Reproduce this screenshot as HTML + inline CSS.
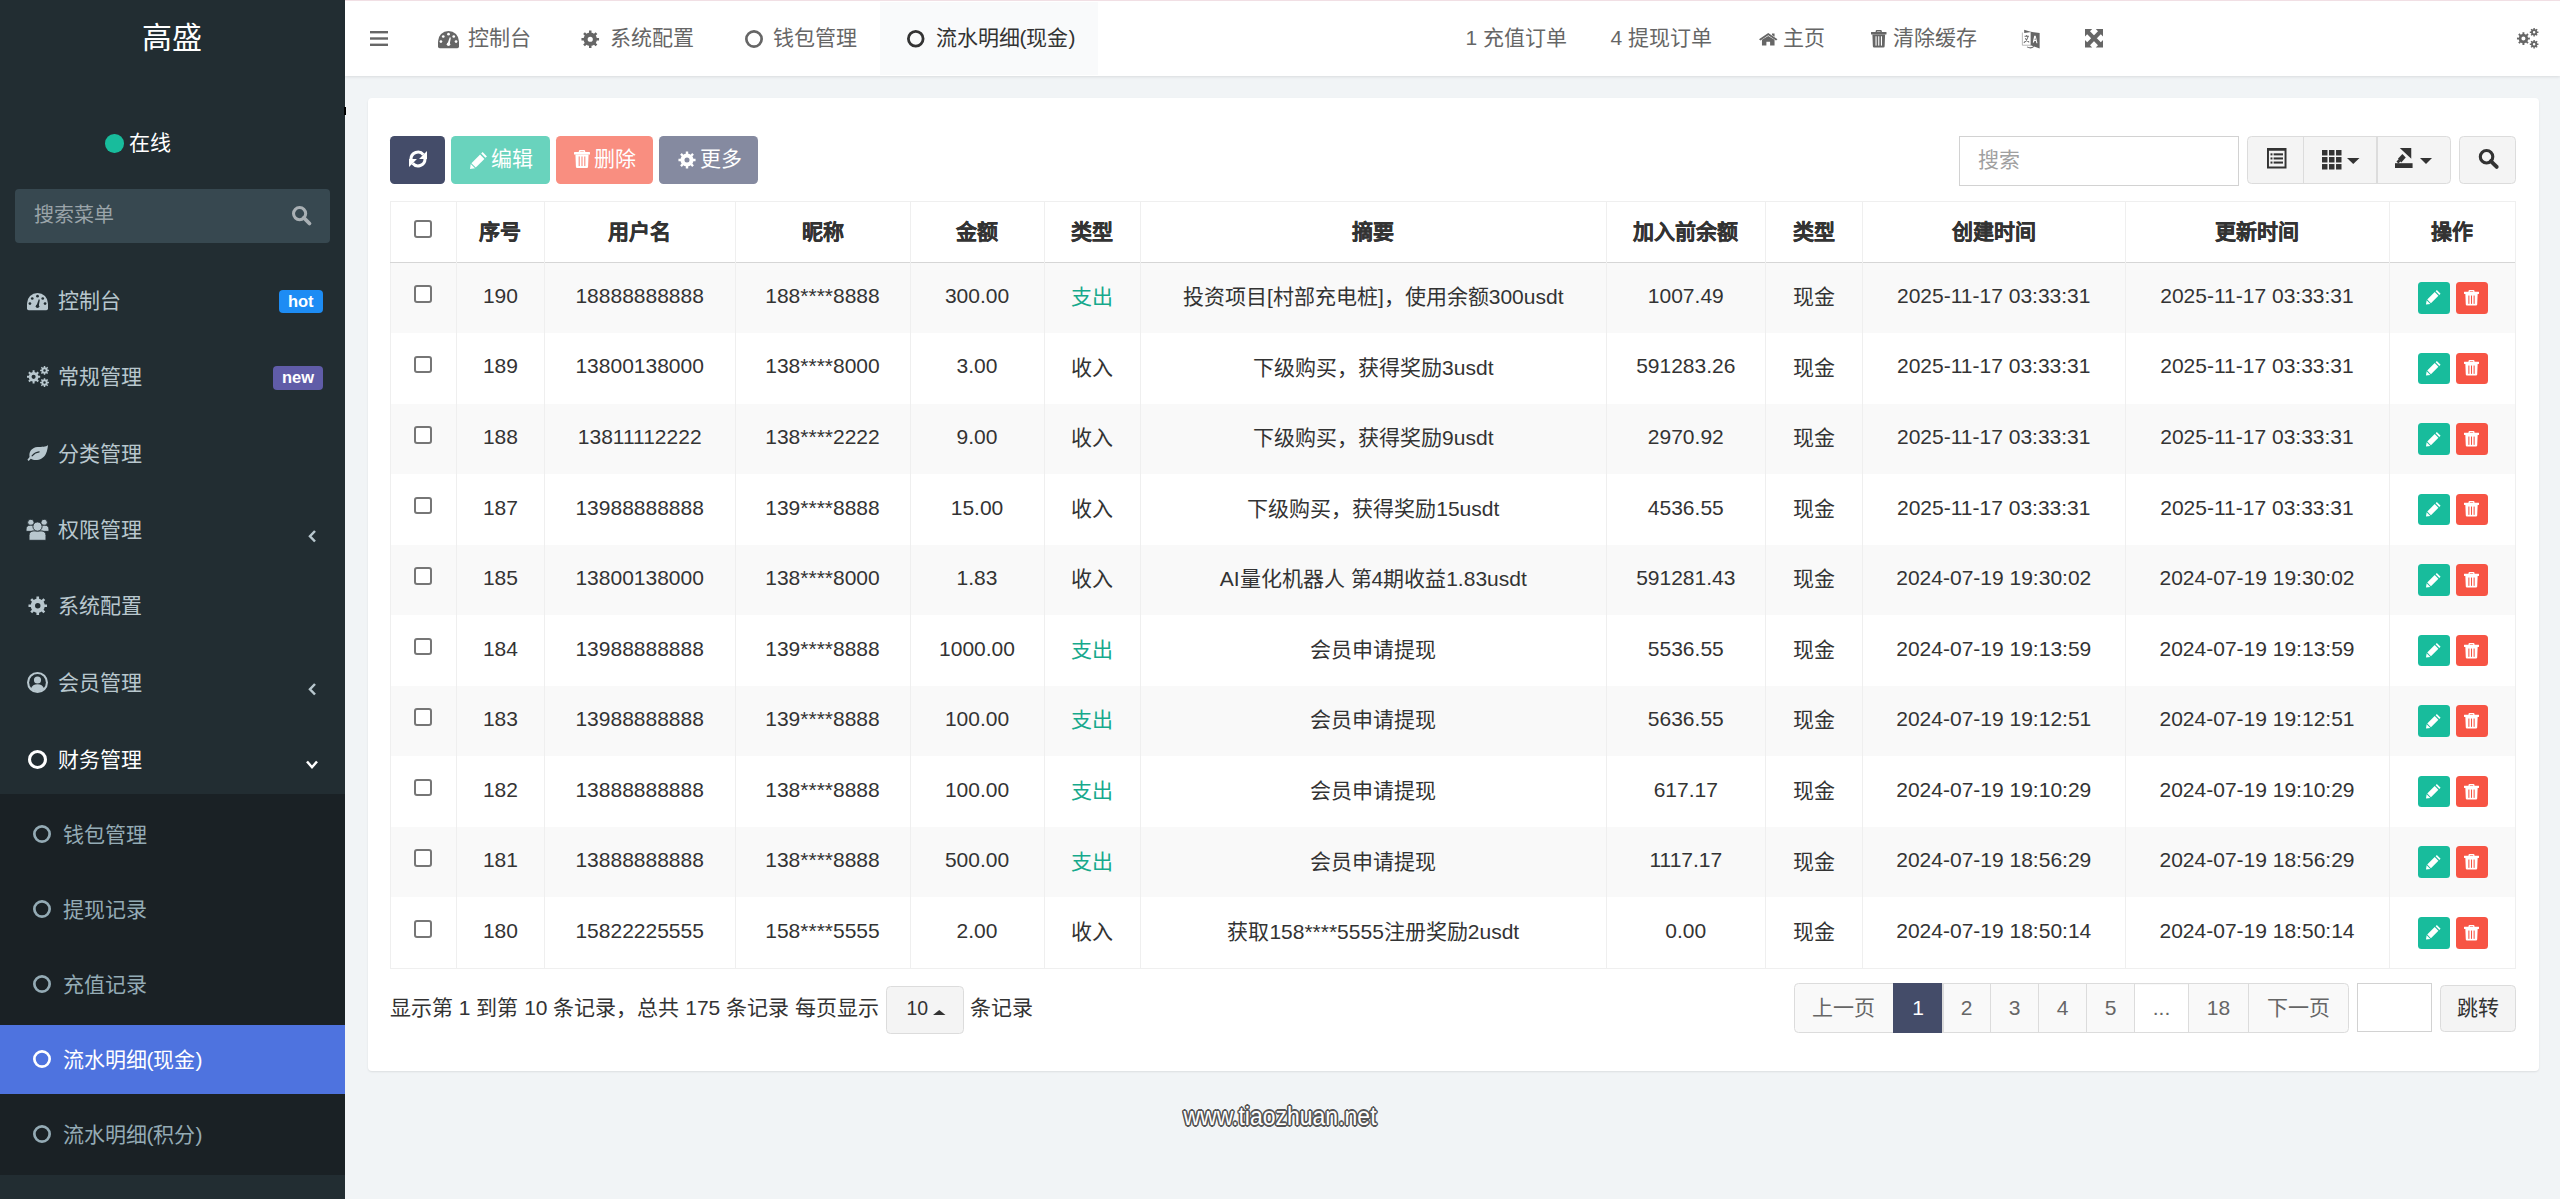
<!DOCTYPE html>
<html lang="zh-CN"><head><meta charset="utf-8"><title>流水明细</title>
<style>
*{box-sizing:border-box;margin:0;padding:0}
html,body{width:2560px;height:1199px;overflow:hidden;background:#f1f4f6;font-family:"Liberation Sans", sans-serif;color:#333}
.abs{position:absolute}
.t{position:absolute;white-space:nowrap}
.i{position:absolute;display:block;overflow:visible}
.badge{border-radius:4px;color:#fff;font-weight:bold;font-size:16.5px;line-height:23px;text-align:center}
.btn{border-radius:4.5px}
.btn2{width:31.5px;height:31.5px;border-radius:3.5px}
.cb{width:18px;height:17.5px;border:2px solid #767676;border-radius:3px;background:#fff}
</style></head><body>
<div class="abs" style="left:0;top:0;width:345px;height:1199px;background:#222d32"></div>
<div class="abs" style="left:0;top:793.5px;width:345px;height:381px;background:#1a2125"></div>
<div class="abs" style="left:0;top:1025px;width:345px;height:69px;background:#4e73df"></div>
<div class="t" style="left:-128px;width:600px;text-align:center;top:16.70px;height:42px;line-height:42px;font-size:30px;color:#fff;">高盛</div>
<div class="abs" style="left:105px;top:134px;width:18.5px;height:18.5px;border-radius:50%;background:#18bc9c"></div>
<div class="t" style="left:128.5px;top:127.70px;height:29px;line-height:29px;font-size:21px;color:#fff;">在线</div>
<div class="abs" style="left:15px;top:189px;width:315px;height:54px;background:#374850;border-radius:4px"></div>
<div class="t" style="left:34px;top:200.70px;height:28px;line-height:28px;font-size:20px;color:#9aa4a9;">搜索菜单</div>
<svg class="i" style="left:292px;top:206px;width:19px;height:19px;" viewBox="0 0 100 100"><circle cx="40" cy="40" r="32" fill="none" stroke="#a9b0b4" stroke-width="16"/><path d="M62,62 L92,92" stroke="#a9b0b4" stroke-width="20" stroke-linecap="round"/></svg>
<div class="t" style="left:58px;top:285.60px;height:29px;line-height:29px;font-size:21px;color:#b8c7ce;">控制台</div>
<svg class="i" style="left:27px;top:292.7px;width:21px;height:17.3px;" viewBox="0 0 100 82"><path fill="#b8c7ce" d="M0,50 A50,50 0 0,1 100,50 L100,74 Q100,82 92,82 L8,82 Q0,82 0,74Z"/><g fill="#222d32"><circle cx="50" cy="15" r="6.5"/><circle cx="25" cy="26" r="6.5"/><circle cx="75" cy="26" r="6.5"/><circle cx="14" cy="50" r="6.5"/><circle cx="86" cy="50" r="6.5"/><path d="M45,60 L56,30 L61,32 L56,62Z"/><circle cx="50" cy="63" r="8.5"/></g></svg>
<div class="t" style="left:58px;top:362.10px;height:29px;line-height:29px;font-size:21px;color:#b8c7ce;">常规管理</div>
<svg class="i" style="left:25.8px;top:366.0px;width:23px;height:21px;" viewBox="0 0 100 91"><path fill="#b8c7ce" fill-rule="evenodd" d="M52.40,38.96 L53.57,42.76 L61.67,42.66 L61.67,51.34 L53.57,51.24 L52.40,55.04 L50.54,58.55 L56.34,64.21 L50.21,70.34 L44.55,64.54 L41.04,66.40 L37.24,67.57 L37.34,75.67 L28.66,75.67 L28.76,67.57 L24.96,66.40 L21.45,64.54 L15.79,70.34 L9.66,64.21 L15.46,58.55 L13.60,55.04 L12.43,51.24 L4.33,51.34 L4.33,42.66 L12.43,42.76 L13.60,38.96 L15.46,35.45 L9.66,29.79 L15.79,23.66 L21.45,29.46 L24.96,27.60 L28.76,26.43 L28.66,18.33 L37.34,18.33 L37.24,26.43 L41.04,27.60 L44.55,29.46 L50.21,23.66 L56.34,29.79 L50.54,35.45ZM24.00,47.00a9.00,9.00 0 1,0 18.00,0a9.00,9.00 0 1,0 -18.00,0Z"/><path fill="#b8c7ce" fill-rule="evenodd" d="M93.43,13.64 L94.14,15.87 L99.73,15.76 L99.73,22.24 L94.14,22.13 L93.43,24.36 L92.36,26.43 L96.39,30.31 L91.81,34.89 L87.93,30.86 L85.86,31.93 L83.63,32.64 L83.74,38.23 L77.26,38.23 L77.37,32.64 L75.14,31.93 L73.07,30.86 L69.19,34.89 L64.61,30.31 L68.64,26.43 L67.57,24.36 L66.86,22.13 L61.27,22.24 L61.27,15.76 L66.86,15.87 L67.57,13.64 L68.64,11.57 L64.61,7.69 L69.19,3.11 L73.07,7.14 L75.14,6.07 L77.37,5.36 L77.26,-0.23 L83.74,-0.23 L83.63,5.36 L85.86,6.07 L87.93,7.14 L91.81,3.11 L96.39,7.69 L92.36,11.57ZM75.00,19.00a5.50,5.50 0 1,0 11.00,0a5.50,5.50 0 1,0 -11.00,0Z"/><path fill="#b8c7ce" fill-rule="evenodd" d="M93.43,66.64 L94.14,68.87 L99.73,68.76 L99.73,75.24 L94.14,75.13 L93.43,77.36 L92.36,79.43 L96.39,83.31 L91.81,87.89 L87.93,83.86 L85.86,84.93 L83.63,85.64 L83.74,91.23 L77.26,91.23 L77.37,85.64 L75.14,84.93 L73.07,83.86 L69.19,87.89 L64.61,83.31 L68.64,79.43 L67.57,77.36 L66.86,75.13 L61.27,75.24 L61.27,68.76 L66.86,68.87 L67.57,66.64 L68.64,64.57 L64.61,60.69 L69.19,56.11 L73.07,60.14 L75.14,59.07 L77.37,58.36 L77.26,52.77 L83.74,52.77 L83.63,58.36 L85.86,59.07 L87.93,60.14 L91.81,56.11 L96.39,60.69 L92.36,64.57ZM75.00,72.00a5.50,5.50 0 1,0 11.00,0a5.50,5.50 0 1,0 -11.00,0Z"/></svg>
<div class="t" style="left:58px;top:438.50px;height:29px;line-height:29px;font-size:21px;color:#b8c7ce;">分类管理</div>
<svg class="i" style="left:27px;top:444.0px;width:21px;height:17px;" viewBox="0 0 100 80"><path fill="#b8c7ce" d="M100,4 C90,14 70,12 50,14 C24,17 8,34 12,62 L2,74 L8,80 L18,70 C40,84 78,74 90,46 C97,30 99,16 100,4Z"/><path fill="none" stroke="#222d32" stroke-width="5" stroke-linecap="round" d="M24,56 C34,44 44,38 58,37"/></svg>
<div class="t" style="left:58px;top:515.00px;height:29px;line-height:29px;font-size:21px;color:#b8c7ce;">权限管理</div>
<svg class="i" style="left:26px;top:518.6999999999999px;width:23px;height:21.3px;" viewBox="0 0 100 93"><g fill="#b8c7ce" stroke="#222d32" stroke-width="4"><circle cx="21" cy="15" r="14"/><circle cx="79" cy="15" r="14"/><path d="M0,54 L0,44 C0,32 8,27 18,27 L82,27 C92,27 100,32 100,44 L100,54Z"/><path d="M13,93 L13,72 C13,58 22,52 34,52 L66,52 C78,52 87,58 87,72 L87,93Z"/><circle cx="50" cy="33" r="20"/></g></svg>
<div class="t" style="left:58px;top:591.30px;height:29px;line-height:29px;font-size:21px;color:#b8c7ce;">系统配置</div>
<svg class="i" style="left:28px;top:596.0px;width:19.5px;height:19.5px;" viewBox="0 0 100 100"><path fill="#b8c7ce" fill-rule="evenodd" d="M83.26,36.22 L85.35,43.21 L97.53,43.29 L97.53,56.71 L85.35,56.79 L83.26,63.78 L79.80,70.20 L88.35,78.87 L78.87,88.35 L70.20,79.80 L63.78,83.26 L56.79,85.35 L56.71,97.53 L43.29,97.53 L43.21,85.35 L36.22,83.26 L29.80,79.80 L21.13,88.35 L11.65,78.87 L20.20,70.20 L16.74,63.78 L14.65,56.79 L2.47,56.71 L2.47,43.29 L14.65,43.21 L16.74,36.22 L20.20,29.80 L11.65,21.13 L21.13,11.65 L29.80,20.20 L36.22,16.74 L43.21,14.65 L43.29,2.47 L56.71,2.47 L56.79,14.65 L63.78,16.74 L70.20,20.20 L78.87,11.65 L88.35,21.13 L79.80,29.80ZM36.00,50.00a14.00,14.00 0 1,0 28.00,0a14.00,14.00 0 1,0 -28.00,0Z"/></svg>
<div class="t" style="left:58px;top:667.90px;height:29px;line-height:29px;font-size:21px;color:#b8c7ce;">会员管理</div>
<svg class="i" style="left:27px;top:672.0px;width:21px;height:21px;" viewBox="0 0 100 100"><circle cx="50" cy="50" r="50" fill="#b8c7ce"/><circle cx="50" cy="50" r="40" fill="#222d32"/><circle cx="50" cy="38" r="17" fill="#b8c7ce"/><path fill="#b8c7ce" d="M18,80 C24,64 34,58 50,58 C66,58 76,64 82,80 C74,88 62,92 50,92 C38,92 26,88 18,80Z"/></svg>
<div class="t" style="left:58px;top:744.50px;height:29px;line-height:29px;font-size:21px;color:#fff;">财务管理</div>
<svg class="i" style="left:28px;top:750.0px;width:19px;height:19px;" viewBox="0 0 100 100"><circle cx="50" cy="50" r="42.0" fill="none" stroke="#fff" stroke-width="16"/></svg>
<div class="abs badge" style="left:278.5px;top:289.5px;width:44.5px;height:23.5px;background:#1d8cf4">hot</div>
<div class="abs badge" style="left:273px;top:365.5px;width:50px;height:24px;background:#605ca8">new</div>
<svg class="i" style="left:307.5px;top:530px;width:8px;height:12.5px;" viewBox="0 0 8 12.5"><path fill="none" stroke="#b8c7ce" stroke-width="2.5" d="M7,1 L2,6.25 L7,11.5"/></svg>
<svg class="i" style="left:307.5px;top:683px;width:8px;height:12.5px;" viewBox="0 0 8 12.5"><path fill="none" stroke="#b8c7ce" stroke-width="2.5" d="M7,1 L2,6.25 L7,11.5"/></svg>
<svg class="i" style="left:306px;top:760px;width:12px;height:9px;" viewBox="0 0 12 9"><path fill="none" stroke="#fff" stroke-width="2.5" d="M1,1.5 L6,7.2 L11,1.5"/></svg>
<div class="t" style="left:62.5px;top:819.90px;height:29px;line-height:29px;font-size:21px;color:#94abb5;">钱包管理</div>
<svg class="i" style="left:33px;top:825.0px;width:18px;height:18px;" viewBox="0 0 100 100"><circle cx="50" cy="50" r="42.5" fill="none" stroke="#94abb5" stroke-width="15"/></svg>
<div class="t" style="left:62.5px;top:894.90px;height:29px;line-height:29px;font-size:21px;color:#94abb5;">提现记录</div>
<svg class="i" style="left:33px;top:900.0px;width:18px;height:18px;" viewBox="0 0 100 100"><circle cx="50" cy="50" r="42.5" fill="none" stroke="#94abb5" stroke-width="15"/></svg>
<div class="t" style="left:62.5px;top:969.90px;height:29px;line-height:29px;font-size:21px;color:#94abb5;">充值记录</div>
<svg class="i" style="left:33px;top:975.0px;width:18px;height:18px;" viewBox="0 0 100 100"><circle cx="50" cy="50" r="42.5" fill="none" stroke="#94abb5" stroke-width="15"/></svg>
<div class="t" style="left:62.5px;top:1045.10px;height:29px;line-height:29px;font-size:21px;color:#fff;">流水明细(现金)</div>
<svg class="i" style="left:33px;top:1050.2px;width:18px;height:18px;" viewBox="0 0 100 100"><circle cx="50" cy="50" r="42.5" fill="none" stroke="#fff" stroke-width="15"/></svg>
<div class="t" style="left:62.5px;top:1119.90px;height:29px;line-height:29px;font-size:21px;color:#94abb5;">流水明细(积分)</div>
<svg class="i" style="left:33px;top:1125.0px;width:18px;height:18px;" viewBox="0 0 100 100"><circle cx="50" cy="50" r="42.5" fill="none" stroke="#94abb5" stroke-width="15"/></svg>
<div class="abs" style="left:344px;top:107px;width:2px;height:8px;background:#000"></div>
<div class="abs" style="left:345px;top:0;width:2215px;height:75.5px;background:#fff;box-shadow:0 1px 3px rgba(0,0,0,.10)"></div>
<div class="abs" style="left:345px;top:0;width:2215px;height:1px;background:#f1dfe4"></div>
<div class="abs" style="left:880px;top:2px;width:218px;height:73px;background:#f9fafb"></div>
<svg class="i" style="left:370px;top:31px;width:18px;height:15px;" viewBox="0 0 100 100" preserveAspectRatio="none"><g fill="#666"><rect x="0" y="0" width="100" height="16"/><rect x="0" y="42" width="100" height="16"/><rect x="0" y="84" width="100" height="16"/></g></svg>
<svg class="i" style="left:438px;top:30.5px;width:21px;height:17.3px;" viewBox="0 0 100 82"><path fill="#666" d="M0,50 A50,50 0 0,1 100,50 L100,74 Q100,82 92,82 L8,82 Q0,82 0,74Z"/><g fill="#fff"><circle cx="50" cy="15" r="6.5"/><circle cx="25" cy="26" r="6.5"/><circle cx="75" cy="26" r="6.5"/><circle cx="14" cy="50" r="6.5"/><circle cx="86" cy="50" r="6.5"/><path d="M45,60 L56,30 L61,32 L56,62Z"/><circle cx="50" cy="63" r="8.5"/></g></svg>
<div class="t" style="left:467.5px;top:23.20px;height:29px;line-height:29px;font-size:21px;color:#666;">控制台</div>
<svg class="i" style="left:581px;top:29.5px;width:18.5px;height:18.5px;" viewBox="0 0 100 100"><path fill="#666" fill-rule="evenodd" d="M83.26,36.22 L85.35,43.21 L97.53,43.29 L97.53,56.71 L85.35,56.79 L83.26,63.78 L79.80,70.20 L88.35,78.87 L78.87,88.35 L70.20,79.80 L63.78,83.26 L56.79,85.35 L56.71,97.53 L43.29,97.53 L43.21,85.35 L36.22,83.26 L29.80,79.80 L21.13,88.35 L11.65,78.87 L20.20,70.20 L16.74,63.78 L14.65,56.79 L2.47,56.71 L2.47,43.29 L14.65,43.21 L16.74,36.22 L20.20,29.80 L11.65,21.13 L21.13,11.65 L29.80,20.20 L36.22,16.74 L43.21,14.65 L43.29,2.47 L56.71,2.47 L56.79,14.65 L63.78,16.74 L70.20,20.20 L78.87,11.65 L88.35,21.13 L79.80,29.80ZM36.00,50.00a14.00,14.00 0 1,0 28.00,0a14.00,14.00 0 1,0 -28.00,0Z"/></svg>
<div class="t" style="left:609.5px;top:23.20px;height:29px;line-height:29px;font-size:21px;color:#666;">系统配置</div>
<svg class="i" style="left:744.5px;top:29.5px;width:18px;height:18px;" viewBox="0 0 100 100"><circle cx="50" cy="50" r="42.5" fill="none" stroke="#666" stroke-width="15"/></svg>
<div class="t" style="left:772.5px;top:23.20px;height:29px;line-height:29px;font-size:21px;color:#666;">钱包管理</div>
<svg class="i" style="left:907px;top:29.5px;width:17.5px;height:17.5px;" viewBox="0 0 100 100"><circle cx="50" cy="50" r="42.0" fill="none" stroke="#333" stroke-width="16"/></svg>
<div class="t" style="left:935.5px;top:23.20px;height:29px;line-height:29px;font-size:21px;color:#333;">流水明细(现金)</div>
<div class="t" style="left:1465.5px;top:23.20px;height:29px;line-height:29px;font-size:21px;color:#666;">1 充值订单</div>
<div class="t" style="left:1610.5px;top:23.20px;height:29px;line-height:29px;font-size:21px;color:#666;">4 提现订单</div>
<svg class="i" style="left:1758.5px;top:31.5px;width:18.5px;height:14px;" viewBox="0 0 100 100" preserveAspectRatio="none"><g fill="#666"><path d="M50,8 L100,52 L92,60 L50,24 L8,60 L0,52Z"/><path d="M70,10 L84,10 L84,34 L70,22Z"/><path d="M16,56 L50,28 L84,56 L84,96 L60,96 L60,70 L40,70 L40,96 L16,96Z"/></g></svg>
<div class="t" style="left:1783px;top:23.20px;height:29px;line-height:29px;font-size:21px;color:#666;">主页</div>
<svg class="i" style="left:1871px;top:30px;width:15.5px;height:17.5px;" viewBox="0 0 100 112" preserveAspectRatio="none"><g fill="#666"><path fill-rule="evenodd" d="M30,14 L30,8 Q30,0 38,0 L62,0 Q70,0 70,8 L70,14Z M39,14 L39,9 L61,9 L61,14Z"/><rect x="0" y="13" width="100" height="15" rx="2"/><path d="M9,28 L91,28 L88,104 Q88,112 80,112 L20,112 Q12,112 12,104Z"/></g><g fill="#fff"><rect x="29" y="40" width="7" height="60"/><rect x="46.5" y="40" width="7" height="60"/><rect x="64" y="40" width="7" height="60"/></g></svg>
<div class="t" style="left:1893px;top:23.20px;height:29px;line-height:29px;font-size:21px;color:#666;">清除缓存</div>
<svg class="i" style="left:2022px;top:28px;width:18px;height:20.5px;" viewBox="0 0 100 100" preserveAspectRatio="none"><path fill="none" stroke="#666" stroke-width="4" opacity=".6" d="M2,22 L2,84 L50,84"/><path fill="#666" d="M12,8 L52,20 L12,24Z"/><path fill="#666" d="M48,18 L98,24 L98,100 L48,84Z"/><path fill="#fff" d="M60,70 L68,38 L76,38 L86,74 L80,74 L77,64 L69,64 L66,72Z M70,58 L76,58 L73,46Z"/><path fill="none" stroke="#666" stroke-width="5" d="M14,40 L38,40 M26,34 L26,40 M34,42 C30,56 22,66 10,72 M18,50 C24,60 30,66 40,70"/><path fill="none" stroke="#666" stroke-width="5" d="M28,92 C40,98 56,98 66,90"/></svg>
<svg class="i" style="left:2085px;top:29px;width:18px;height:18.5px;" viewBox="0 0 100 100" preserveAspectRatio="none"><g fill="#666"><path d="M0,0 L40,0 L0,40Z"/><path d="M100,0 L60,0 L100,40Z"/><path d="M0,100 L40,100 L0,60Z"/><path d="M100,100 L60,100 L100,60Z"/></g><path stroke="#666" stroke-width="22" d="M12,12 L88,88 M88,12 L12,88"/></svg>
<svg class="i" style="left:2516px;top:28px;width:22.5px;height:20.5px;" viewBox="0 0 100 91" preserveAspectRatio="none"><path fill="#666" fill-rule="evenodd" d="M52.40,38.96 L53.57,42.76 L61.67,42.66 L61.67,51.34 L53.57,51.24 L52.40,55.04 L50.54,58.55 L56.34,64.21 L50.21,70.34 L44.55,64.54 L41.04,66.40 L37.24,67.57 L37.34,75.67 L28.66,75.67 L28.76,67.57 L24.96,66.40 L21.45,64.54 L15.79,70.34 L9.66,64.21 L15.46,58.55 L13.60,55.04 L12.43,51.24 L4.33,51.34 L4.33,42.66 L12.43,42.76 L13.60,38.96 L15.46,35.45 L9.66,29.79 L15.79,23.66 L21.45,29.46 L24.96,27.60 L28.76,26.43 L28.66,18.33 L37.34,18.33 L37.24,26.43 L41.04,27.60 L44.55,29.46 L50.21,23.66 L56.34,29.79 L50.54,35.45ZM24.00,47.00a9.00,9.00 0 1,0 18.00,0a9.00,9.00 0 1,0 -18.00,0Z"/><path fill="#666" fill-rule="evenodd" d="M93.43,13.64 L94.14,15.87 L99.73,15.76 L99.73,22.24 L94.14,22.13 L93.43,24.36 L92.36,26.43 L96.39,30.31 L91.81,34.89 L87.93,30.86 L85.86,31.93 L83.63,32.64 L83.74,38.23 L77.26,38.23 L77.37,32.64 L75.14,31.93 L73.07,30.86 L69.19,34.89 L64.61,30.31 L68.64,26.43 L67.57,24.36 L66.86,22.13 L61.27,22.24 L61.27,15.76 L66.86,15.87 L67.57,13.64 L68.64,11.57 L64.61,7.69 L69.19,3.11 L73.07,7.14 L75.14,6.07 L77.37,5.36 L77.26,-0.23 L83.74,-0.23 L83.63,5.36 L85.86,6.07 L87.93,7.14 L91.81,3.11 L96.39,7.69 L92.36,11.57ZM75.00,19.00a5.50,5.50 0 1,0 11.00,0a5.50,5.50 0 1,0 -11.00,0Z"/><path fill="#666" fill-rule="evenodd" d="M93.43,66.64 L94.14,68.87 L99.73,68.76 L99.73,75.24 L94.14,75.13 L93.43,77.36 L92.36,79.43 L96.39,83.31 L91.81,87.89 L87.93,83.86 L85.86,84.93 L83.63,85.64 L83.74,91.23 L77.26,91.23 L77.37,85.64 L75.14,84.93 L73.07,83.86 L69.19,87.89 L64.61,83.31 L68.64,79.43 L67.57,77.36 L66.86,75.13 L61.27,75.24 L61.27,68.76 L66.86,68.87 L67.57,66.64 L68.64,64.57 L64.61,60.69 L69.19,56.11 L73.07,60.14 L75.14,59.07 L77.37,58.36 L77.26,52.77 L83.74,52.77 L83.63,58.36 L85.86,59.07 L87.93,60.14 L91.81,56.11 L96.39,60.69 L92.36,64.57ZM75.00,72.00a5.50,5.50 0 1,0 11.00,0a5.50,5.50 0 1,0 -11.00,0Z"/></svg>
<div class="abs" style="left:368px;top:98px;width:2170.5px;height:973px;background:#fff;border-radius:4px;box-shadow:0 1px 2px rgba(0,0,0,.09)"></div>
<div class="abs btn" style="left:390px;top:136px;width:55px;height:48px;background:#444c69"></div>
<svg class="i" style="left:409px;top:150px;width:18px;height:18px;" viewBox="0 0 100 100"><g fill="none" stroke="#fff" stroke-width="17"><path d="M11,50 A39,39 0 0,1 80,26"/><path d="M89,50 A39,39 0 0,1 20,74"/></g><g fill="#fff"><path d="M100,6 L100,50 L56,50Z"/><path d="M0,94 L0,50 L44,50Z"/></g></svg>
<div class="abs btn" style="left:451px;top:136px;width:99px;height:48px;background:#69d3bd"></div>
<svg class="i" style="left:469.5px;top:150.5px;width:18px;height:18px;" viewBox="0 0 100 100"><g fill="#fff"><path d="M70,6 L94,30 L86,38 L62,14Z"/><path d="M56,20 L80,44 L32,92 L8,68Z"/><path d="M4,72 L28,96 L0,100Z"/></g></svg>
<div class="t" style="left:491px;top:144.20px;height:29px;line-height:29px;font-size:21px;color:#fff;">编辑</div>
<div class="abs btn" style="left:556px;top:136px;width:97px;height:48px;background:#f98e80"></div>
<svg class="i" style="left:574px;top:150px;width:16px;height:18px;" viewBox="0 0 100 112" preserveAspectRatio="none"><g fill="#fff"><path fill-rule="evenodd" d="M30,14 L30,8 Q30,0 38,0 L62,0 Q70,0 70,8 L70,14Z M39,14 L39,9 L61,9 L61,14Z"/><rect x="0" y="13" width="100" height="15" rx="2"/><path d="M9,28 L91,28 L88,104 Q88,112 80,112 L20,112 Q12,112 12,104Z"/></g><g fill="#f98e80"><rect x="29" y="40" width="7" height="60"/><rect x="46.5" y="40" width="7" height="60"/><rect x="64" y="40" width="7" height="60"/></g></svg>
<div class="t" style="left:594px;top:144.20px;height:29px;line-height:29px;font-size:21px;color:#fff;">删除</div>
<div class="abs btn" style="left:659px;top:136px;width:99px;height:48px;background:#858aa0"></div>
<svg class="i" style="left:677.5px;top:150.5px;width:18px;height:18px;" viewBox="0 0 100 100"><path fill="#fff" fill-rule="evenodd" d="M83.26,36.22 L85.35,43.21 L97.53,43.29 L97.53,56.71 L85.35,56.79 L83.26,63.78 L79.80,70.20 L88.35,78.87 L78.87,88.35 L70.20,79.80 L63.78,83.26 L56.79,85.35 L56.71,97.53 L43.29,97.53 L43.21,85.35 L36.22,83.26 L29.80,79.80 L21.13,88.35 L11.65,78.87 L20.20,70.20 L16.74,63.78 L14.65,56.79 L2.47,56.71 L2.47,43.29 L14.65,43.21 L16.74,36.22 L20.20,29.80 L11.65,21.13 L21.13,11.65 L29.80,20.20 L36.22,16.74 L43.21,14.65 L43.29,2.47 L56.71,2.47 L56.79,14.65 L63.78,16.74 L70.20,20.20 L78.87,11.65 L88.35,21.13 L79.80,29.80ZM36.00,50.00a14.00,14.00 0 1,0 28.00,0a14.00,14.00 0 1,0 -28.00,0Z"/></svg>
<div class="t" style="left:699.5px;top:144.20px;height:29px;line-height:29px;font-size:21px;color:#fff;">更多</div>
<div class="abs" style="left:1959px;top:136px;width:280px;height:50px;border:1.5px solid #d2d2d2;background:#fff"></div>
<div class="t" style="left:1977.5px;top:145.20px;height:29px;line-height:29px;font-size:21px;color:#a0a0a0;">搜索</div>
<div class="abs" style="left:2247px;top:136px;width:204px;height:48px;border:1.5px solid #dcdcdc;background:#f4f4f4;border-radius:4.5px"></div>
<div class="abs" style="left:2302.5px;top:136px;width:1.5px;height:48px;background:#dcdcdc"></div>
<div class="abs" style="left:2376px;top:136px;width:1.5px;height:48px;background:#dcdcdc"></div>
<svg class="i" style="left:2267px;top:147.5px;width:19.5px;height:20.5px;" viewBox="0 0 100 100" preserveAspectRatio="none"><path fill="#333" fill-rule="evenodd" d="M0,0 H100 V100 H0Z M10,14 V90 H90 V14Z"/><g fill="#333"><rect x="18" y="26" width="10" height="10"/><rect x="34" y="26" width="48" height="10"/><rect x="18" y="46" width="10" height="10"/><rect x="34" y="46" width="48" height="10"/><rect x="18" y="66" width="10" height="10"/><rect x="34" y="66" width="48" height="10"/></g></svg>
<svg class="i" style="left:2321.5px;top:150px;width:19.5px;height:19.5px;" viewBox="0 0 100 100"><g fill="#333"><rect x="0" y="0" width="28" height="28"/><rect x="36" y="0" width="28" height="28"/><rect x="72" y="0" width="28" height="28"/><rect x="0" y="36" width="28" height="28"/><rect x="36" y="36" width="28" height="28"/><rect x="72" y="36" width="28" height="28"/><rect x="0" y="72" width="28" height="28"/><rect x="36" y="72" width="28" height="28"/><rect x="72" y="72" width="28" height="28"/></g></svg>
<svg class="i" style="left:2346.5px;top:157.5px;width:12.5px;height:6px;" viewBox="0 0 100 100" preserveAspectRatio="none"><path fill="#333" d="M0,0 L100,0 L50,100Z"/></svg>
<svg class="i" style="left:2395px;top:148px;width:18.5px;height:20px;" viewBox="0 0 100 100" preserveAspectRatio="none"><g fill="#333"><rect x="0" y="76" width="95" height="24"/><path d="M26,0 L88,0 L88,54Z"/><path d="M40,30 L58,48 L34,72 L16,54Z"/><path d="M8,68 L20,56 L30,66 L18,78Z"/></g></svg>
<svg class="i" style="left:2420px;top:158px;width:12px;height:6px;" viewBox="0 0 100 100" preserveAspectRatio="none"><path fill="#333" d="M0,0 L100,0 L50,100Z"/></svg>
<div class="abs" style="left:2459px;top:136px;width:57px;height:48px;border:1.5px solid #dcdcdc;background:#f4f4f4;border-radius:4.5px"></div>
<svg class="i" style="left:2477.5px;top:149px;width:21px;height:19.5px;" viewBox="0 0 100 100"><circle cx="40" cy="40" r="32" fill="none" stroke="#333" stroke-width="16"/><path d="M62,62 L92,92" stroke="#333" stroke-width="20" stroke-linecap="round"/></svg>
<div class="abs" style="left:390px;top:262.75px;width:2125px;height:70.5px;background:#f9f9f9"></div>
<div class="abs" style="left:390px;top:403.75px;width:2125px;height:70.5px;background:#f9f9f9"></div>
<div class="abs" style="left:390px;top:544.75px;width:2125px;height:70.5px;background:#f9f9f9"></div>
<div class="abs" style="left:390px;top:685.75px;width:2125px;height:70.5px;background:#f9f9f9"></div>
<div class="abs" style="left:390px;top:826.75px;width:2125px;height:70.5px;background:#f9f9f9"></div>
<div class="abs" style="left:390px;top:201px;width:2125.5px;height:767.75px;border:1px solid #efefef"></div>
<div class="abs" style="left:390px;top:261.75px;width:2125px;height:1px;background:#d6d6d6"></div>
<div class="abs" style="left:456.00px;top:201px;width:1px;height:766.75px;background:#efefef"></div>
<div class="abs" style="left:543.90px;top:201px;width:1px;height:766.75px;background:#efefef"></div>
<div class="abs" style="left:734.50px;top:201px;width:1px;height:766.75px;background:#efefef"></div>
<div class="abs" style="left:909.50px;top:201px;width:1px;height:766.75px;background:#efefef"></div>
<div class="abs" style="left:1043.50px;top:201px;width:1px;height:766.75px;background:#efefef"></div>
<div class="abs" style="left:1140.10px;top:201px;width:1px;height:766.75px;background:#efefef"></div>
<div class="abs" style="left:1605.50px;top:201px;width:1px;height:766.75px;background:#efefef"></div>
<div class="abs" style="left:1765.10px;top:201px;width:1px;height:766.75px;background:#efefef"></div>
<div class="abs" style="left:1862.00px;top:201px;width:1px;height:766.75px;background:#efefef"></div>
<div class="abs" style="left:2124.50px;top:201px;width:1px;height:766.75px;background:#efefef"></div>
<div class="abs" style="left:2388.50px;top:201px;width:1px;height:766.75px;background:#efefef"></div>
<div class="abs cb" style="left:414px;top:220px"></div>
<div class="t" style="left:200.45px;width:600px;text-align:center;top:217.10px;height:29px;line-height:29px;font-size:21px;color:#333;font-weight:bold;-webkit-text-stroke:0.3px #333">序号</div>
<div class="t" style="left:339.70000000000005px;width:600px;text-align:center;top:217.10px;height:29px;line-height:29px;font-size:21px;color:#333;font-weight:bold;-webkit-text-stroke:0.3px #333">用户名</div>
<div class="t" style="left:522.5px;width:600px;text-align:center;top:217.10px;height:29px;line-height:29px;font-size:21px;color:#333;font-weight:bold;-webkit-text-stroke:0.3px #333">昵称</div>
<div class="t" style="left:677.0px;width:600px;text-align:center;top:217.10px;height:29px;line-height:29px;font-size:21px;color:#333;font-weight:bold;-webkit-text-stroke:0.3px #333">金额</div>
<div class="t" style="left:792.3px;width:600px;text-align:center;top:217.10px;height:29px;line-height:29px;font-size:21px;color:#333;font-weight:bold;-webkit-text-stroke:0.3px #333">类型</div>
<div class="t" style="left:1073.3px;width:600px;text-align:center;top:217.10px;height:29px;line-height:29px;font-size:21px;color:#333;font-weight:bold;-webkit-text-stroke:0.3px #333">摘要</div>
<div class="t" style="left:1385.8px;width:600px;text-align:center;top:217.10px;height:29px;line-height:29px;font-size:21px;color:#333;font-weight:bold;-webkit-text-stroke:0.3px #333">加入前余额</div>
<div class="t" style="left:1514.05px;width:600px;text-align:center;top:217.10px;height:29px;line-height:29px;font-size:21px;color:#333;font-weight:bold;-webkit-text-stroke:0.3px #333">类型</div>
<div class="t" style="left:1693.75px;width:600px;text-align:center;top:217.10px;height:29px;line-height:29px;font-size:21px;color:#333;font-weight:bold;-webkit-text-stroke:0.3px #333">创建时间</div>
<div class="t" style="left:1957.0px;width:600px;text-align:center;top:217.10px;height:29px;line-height:29px;font-size:21px;color:#333;font-weight:bold;-webkit-text-stroke:0.3px #333">更新时间</div>
<div class="t" style="left:2152.0px;width:600px;text-align:center;top:217.10px;height:29px;line-height:29px;font-size:21px;color:#333;font-weight:bold;-webkit-text-stroke:0.3px #333">操作</div>
<div class="abs cb" style="left:414px;top:285.00px"></div>
<div class="t" style="left:200.45px;width:600px;text-align:center;top:280.90px;height:29px;line-height:29px;font-size:21px;color:#333;">190</div>
<div class="t" style="left:339.70000000000005px;width:600px;text-align:center;top:280.90px;height:29px;line-height:29px;font-size:21px;color:#333;">18888888888</div>
<div class="t" style="left:522.5px;width:600px;text-align:center;top:280.90px;height:29px;line-height:29px;font-size:21px;color:#333;">188****8888</div>
<div class="t" style="left:677.0px;width:600px;text-align:center;top:280.90px;height:29px;line-height:29px;font-size:21px;color:#333;">300.00</div>
<div class="t" style="left:792.3px;width:600px;text-align:center;top:282.10px;height:29px;line-height:29px;font-size:21px;color:#16a98c;">支出</div>
<div class="t" style="left:1073.3px;width:600px;text-align:center;top:282.10px;height:29px;line-height:29px;font-size:21px;color:#333;">投资项目[村部充电桩]，使用余额300usdt</div>
<div class="t" style="left:1385.8px;width:600px;text-align:center;top:280.90px;height:29px;line-height:29px;font-size:21px;color:#333;">1007.49</div>
<div class="t" style="left:1514.05px;width:600px;text-align:center;top:282.10px;height:29px;line-height:29px;font-size:21px;color:#333;">现金</div>
<div class="t" style="left:1693.75px;width:600px;text-align:center;top:280.90px;height:29px;line-height:29px;font-size:21px;color:#333;">2025-11-17 03:33:31</div>
<div class="t" style="left:1957.0px;width:600px;text-align:center;top:280.90px;height:29px;line-height:29px;font-size:21px;color:#333;">2025-11-17 03:33:31</div>
<div class="abs btn2" style="left:2418px;top:282.00px;background:#18bc9c"></div>
<svg class="i" style="left:2426px;top:289.4px;width:15.5px;height:15.5px;" viewBox="0 0 100 100"><g fill="#fff"><path d="M70,6 L94,30 L86,38 L62,14Z"/><path d="M56,20 L80,44 L32,92 L8,68Z"/><path d="M4,72 L28,96 L0,100Z"/></g></svg>
<div class="abs btn2" style="left:2456px;top:282.00px;background:#f75444"></div>
<svg class="i" style="left:2464px;top:289.7px;width:15px;height:15.5px;" viewBox="0 0 100 112" preserveAspectRatio="none"><g fill="#fff"><path fill-rule="evenodd" d="M30,14 L30,8 Q30,0 38,0 L62,0 Q70,0 70,8 L70,14Z M39,14 L39,9 L61,9 L61,14Z"/><rect x="0" y="13" width="100" height="15" rx="2"/><path d="M9,28 L91,28 L88,104 Q88,112 80,112 L20,112 Q12,112 12,104Z"/></g><g fill="#f75444"><rect x="29" y="40" width="7" height="60"/><rect x="46.5" y="40" width="7" height="60"/><rect x="64" y="40" width="7" height="60"/></g></svg>
<div class="abs cb" style="left:414px;top:355.56px"></div>
<div class="t" style="left:200.45px;width:600px;text-align:center;top:351.46px;height:29px;line-height:29px;font-size:21px;color:#333;">189</div>
<div class="t" style="left:339.70000000000005px;width:600px;text-align:center;top:351.46px;height:29px;line-height:29px;font-size:21px;color:#333;">13800138000</div>
<div class="t" style="left:522.5px;width:600px;text-align:center;top:351.46px;height:29px;line-height:29px;font-size:21px;color:#333;">138****8000</div>
<div class="t" style="left:677.0px;width:600px;text-align:center;top:351.46px;height:29px;line-height:29px;font-size:21px;color:#333;">3.00</div>
<div class="t" style="left:792.3px;width:600px;text-align:center;top:352.66px;height:29px;line-height:29px;font-size:21px;color:#333;">收入</div>
<div class="t" style="left:1073.3px;width:600px;text-align:center;top:352.66px;height:29px;line-height:29px;font-size:21px;color:#333;">下级购买，获得奖励3usdt</div>
<div class="t" style="left:1385.8px;width:600px;text-align:center;top:351.46px;height:29px;line-height:29px;font-size:21px;color:#333;">591283.26</div>
<div class="t" style="left:1514.05px;width:600px;text-align:center;top:352.66px;height:29px;line-height:29px;font-size:21px;color:#333;">现金</div>
<div class="t" style="left:1693.75px;width:600px;text-align:center;top:351.46px;height:29px;line-height:29px;font-size:21px;color:#333;">2025-11-17 03:33:31</div>
<div class="t" style="left:1957.0px;width:600px;text-align:center;top:351.46px;height:29px;line-height:29px;font-size:21px;color:#333;">2025-11-17 03:33:31</div>
<div class="abs btn2" style="left:2418px;top:352.56px;background:#18bc9c"></div>
<svg class="i" style="left:2426px;top:359.96px;width:15.5px;height:15.5px;" viewBox="0 0 100 100"><g fill="#fff"><path d="M70,6 L94,30 L86,38 L62,14Z"/><path d="M56,20 L80,44 L32,92 L8,68Z"/><path d="M4,72 L28,96 L0,100Z"/></g></svg>
<div class="abs btn2" style="left:2456px;top:352.56px;background:#f75444"></div>
<svg class="i" style="left:2464px;top:360.26px;width:15px;height:15.5px;" viewBox="0 0 100 112" preserveAspectRatio="none"><g fill="#fff"><path fill-rule="evenodd" d="M30,14 L30,8 Q30,0 38,0 L62,0 Q70,0 70,8 L70,14Z M39,14 L39,9 L61,9 L61,14Z"/><rect x="0" y="13" width="100" height="15" rx="2"/><path d="M9,28 L91,28 L88,104 Q88,112 80,112 L20,112 Q12,112 12,104Z"/></g><g fill="#f75444"><rect x="29" y="40" width="7" height="60"/><rect x="46.5" y="40" width="7" height="60"/><rect x="64" y="40" width="7" height="60"/></g></svg>
<div class="abs cb" style="left:414px;top:426.12px"></div>
<div class="t" style="left:200.45px;width:600px;text-align:center;top:422.02px;height:29px;line-height:29px;font-size:21px;color:#333;">188</div>
<div class="t" style="left:339.70000000000005px;width:600px;text-align:center;top:422.02px;height:29px;line-height:29px;font-size:21px;color:#333;">13811112222</div>
<div class="t" style="left:522.5px;width:600px;text-align:center;top:422.02px;height:29px;line-height:29px;font-size:21px;color:#333;">138****2222</div>
<div class="t" style="left:677.0px;width:600px;text-align:center;top:422.02px;height:29px;line-height:29px;font-size:21px;color:#333;">9.00</div>
<div class="t" style="left:792.3px;width:600px;text-align:center;top:423.22px;height:29px;line-height:29px;font-size:21px;color:#333;">收入</div>
<div class="t" style="left:1073.3px;width:600px;text-align:center;top:423.22px;height:29px;line-height:29px;font-size:21px;color:#333;">下级购买，获得奖励9usdt</div>
<div class="t" style="left:1385.8px;width:600px;text-align:center;top:422.02px;height:29px;line-height:29px;font-size:21px;color:#333;">2970.92</div>
<div class="t" style="left:1514.05px;width:600px;text-align:center;top:423.22px;height:29px;line-height:29px;font-size:21px;color:#333;">现金</div>
<div class="t" style="left:1693.75px;width:600px;text-align:center;top:422.02px;height:29px;line-height:29px;font-size:21px;color:#333;">2025-11-17 03:33:31</div>
<div class="t" style="left:1957.0px;width:600px;text-align:center;top:422.02px;height:29px;line-height:29px;font-size:21px;color:#333;">2025-11-17 03:33:31</div>
<div class="abs btn2" style="left:2418px;top:423.12px;background:#18bc9c"></div>
<svg class="i" style="left:2426px;top:430.52px;width:15.5px;height:15.5px;" viewBox="0 0 100 100"><g fill="#fff"><path d="M70,6 L94,30 L86,38 L62,14Z"/><path d="M56,20 L80,44 L32,92 L8,68Z"/><path d="M4,72 L28,96 L0,100Z"/></g></svg>
<div class="abs btn2" style="left:2456px;top:423.12px;background:#f75444"></div>
<svg class="i" style="left:2464px;top:430.82px;width:15px;height:15.5px;" viewBox="0 0 100 112" preserveAspectRatio="none"><g fill="#fff"><path fill-rule="evenodd" d="M30,14 L30,8 Q30,0 38,0 L62,0 Q70,0 70,8 L70,14Z M39,14 L39,9 L61,9 L61,14Z"/><rect x="0" y="13" width="100" height="15" rx="2"/><path d="M9,28 L91,28 L88,104 Q88,112 80,112 L20,112 Q12,112 12,104Z"/></g><g fill="#f75444"><rect x="29" y="40" width="7" height="60"/><rect x="46.5" y="40" width="7" height="60"/><rect x="64" y="40" width="7" height="60"/></g></svg>
<div class="abs cb" style="left:414px;top:496.68px"></div>
<div class="t" style="left:200.45px;width:600px;text-align:center;top:492.58px;height:29px;line-height:29px;font-size:21px;color:#333;">187</div>
<div class="t" style="left:339.70000000000005px;width:600px;text-align:center;top:492.58px;height:29px;line-height:29px;font-size:21px;color:#333;">13988888888</div>
<div class="t" style="left:522.5px;width:600px;text-align:center;top:492.58px;height:29px;line-height:29px;font-size:21px;color:#333;">139****8888</div>
<div class="t" style="left:677.0px;width:600px;text-align:center;top:492.58px;height:29px;line-height:29px;font-size:21px;color:#333;">15.00</div>
<div class="t" style="left:792.3px;width:600px;text-align:center;top:493.78px;height:29px;line-height:29px;font-size:21px;color:#333;">收入</div>
<div class="t" style="left:1073.3px;width:600px;text-align:center;top:493.78px;height:29px;line-height:29px;font-size:21px;color:#333;">下级购买，获得奖励15usdt</div>
<div class="t" style="left:1385.8px;width:600px;text-align:center;top:492.58px;height:29px;line-height:29px;font-size:21px;color:#333;">4536.55</div>
<div class="t" style="left:1514.05px;width:600px;text-align:center;top:493.78px;height:29px;line-height:29px;font-size:21px;color:#333;">现金</div>
<div class="t" style="left:1693.75px;width:600px;text-align:center;top:492.58px;height:29px;line-height:29px;font-size:21px;color:#333;">2025-11-17 03:33:31</div>
<div class="t" style="left:1957.0px;width:600px;text-align:center;top:492.58px;height:29px;line-height:29px;font-size:21px;color:#333;">2025-11-17 03:33:31</div>
<div class="abs btn2" style="left:2418px;top:493.68px;background:#18bc9c"></div>
<svg class="i" style="left:2426px;top:501.08px;width:15.5px;height:15.5px;" viewBox="0 0 100 100"><g fill="#fff"><path d="M70,6 L94,30 L86,38 L62,14Z"/><path d="M56,20 L80,44 L32,92 L8,68Z"/><path d="M4,72 L28,96 L0,100Z"/></g></svg>
<div class="abs btn2" style="left:2456px;top:493.68px;background:#f75444"></div>
<svg class="i" style="left:2464px;top:501.38px;width:15px;height:15.5px;" viewBox="0 0 100 112" preserveAspectRatio="none"><g fill="#fff"><path fill-rule="evenodd" d="M30,14 L30,8 Q30,0 38,0 L62,0 Q70,0 70,8 L70,14Z M39,14 L39,9 L61,9 L61,14Z"/><rect x="0" y="13" width="100" height="15" rx="2"/><path d="M9,28 L91,28 L88,104 Q88,112 80,112 L20,112 Q12,112 12,104Z"/></g><g fill="#f75444"><rect x="29" y="40" width="7" height="60"/><rect x="46.5" y="40" width="7" height="60"/><rect x="64" y="40" width="7" height="60"/></g></svg>
<div class="abs cb" style="left:414px;top:567.24px"></div>
<div class="t" style="left:200.45px;width:600px;text-align:center;top:563.14px;height:29px;line-height:29px;font-size:21px;color:#333;">185</div>
<div class="t" style="left:339.70000000000005px;width:600px;text-align:center;top:563.14px;height:29px;line-height:29px;font-size:21px;color:#333;">13800138000</div>
<div class="t" style="left:522.5px;width:600px;text-align:center;top:563.14px;height:29px;line-height:29px;font-size:21px;color:#333;">138****8000</div>
<div class="t" style="left:677.0px;width:600px;text-align:center;top:563.14px;height:29px;line-height:29px;font-size:21px;color:#333;">1.83</div>
<div class="t" style="left:792.3px;width:600px;text-align:center;top:564.34px;height:29px;line-height:29px;font-size:21px;color:#333;">收入</div>
<div class="t" style="left:1073.3px;width:600px;text-align:center;top:564.34px;height:29px;line-height:29px;font-size:21px;color:#333;">AI量化机器人 第4期收益1.83usdt</div>
<div class="t" style="left:1385.8px;width:600px;text-align:center;top:563.14px;height:29px;line-height:29px;font-size:21px;color:#333;">591281.43</div>
<div class="t" style="left:1514.05px;width:600px;text-align:center;top:564.34px;height:29px;line-height:29px;font-size:21px;color:#333;">现金</div>
<div class="t" style="left:1693.75px;width:600px;text-align:center;top:563.14px;height:29px;line-height:29px;font-size:21px;color:#333;">2024-07-19 19:30:02</div>
<div class="t" style="left:1957.0px;width:600px;text-align:center;top:563.14px;height:29px;line-height:29px;font-size:21px;color:#333;">2024-07-19 19:30:02</div>
<div class="abs btn2" style="left:2418px;top:564.24px;background:#18bc9c"></div>
<svg class="i" style="left:2426px;top:571.6400000000001px;width:15.5px;height:15.5px;" viewBox="0 0 100 100"><g fill="#fff"><path d="M70,6 L94,30 L86,38 L62,14Z"/><path d="M56,20 L80,44 L32,92 L8,68Z"/><path d="M4,72 L28,96 L0,100Z"/></g></svg>
<div class="abs btn2" style="left:2456px;top:564.24px;background:#f75444"></div>
<svg class="i" style="left:2464px;top:571.94px;width:15px;height:15.5px;" viewBox="0 0 100 112" preserveAspectRatio="none"><g fill="#fff"><path fill-rule="evenodd" d="M30,14 L30,8 Q30,0 38,0 L62,0 Q70,0 70,8 L70,14Z M39,14 L39,9 L61,9 L61,14Z"/><rect x="0" y="13" width="100" height="15" rx="2"/><path d="M9,28 L91,28 L88,104 Q88,112 80,112 L20,112 Q12,112 12,104Z"/></g><g fill="#f75444"><rect x="29" y="40" width="7" height="60"/><rect x="46.5" y="40" width="7" height="60"/><rect x="64" y="40" width="7" height="60"/></g></svg>
<div class="abs cb" style="left:414px;top:637.80px"></div>
<div class="t" style="left:200.45px;width:600px;text-align:center;top:633.70px;height:29px;line-height:29px;font-size:21px;color:#333;">184</div>
<div class="t" style="left:339.70000000000005px;width:600px;text-align:center;top:633.70px;height:29px;line-height:29px;font-size:21px;color:#333;">13988888888</div>
<div class="t" style="left:522.5px;width:600px;text-align:center;top:633.70px;height:29px;line-height:29px;font-size:21px;color:#333;">139****8888</div>
<div class="t" style="left:677.0px;width:600px;text-align:center;top:633.70px;height:29px;line-height:29px;font-size:21px;color:#333;">1000.00</div>
<div class="t" style="left:792.3px;width:600px;text-align:center;top:634.90px;height:29px;line-height:29px;font-size:21px;color:#16a98c;">支出</div>
<div class="t" style="left:1073.3px;width:600px;text-align:center;top:634.90px;height:29px;line-height:29px;font-size:21px;color:#333;">会员申请提现</div>
<div class="t" style="left:1385.8px;width:600px;text-align:center;top:633.70px;height:29px;line-height:29px;font-size:21px;color:#333;">5536.55</div>
<div class="t" style="left:1514.05px;width:600px;text-align:center;top:634.90px;height:29px;line-height:29px;font-size:21px;color:#333;">现金</div>
<div class="t" style="left:1693.75px;width:600px;text-align:center;top:633.70px;height:29px;line-height:29px;font-size:21px;color:#333;">2024-07-19 19:13:59</div>
<div class="t" style="left:1957.0px;width:600px;text-align:center;top:633.70px;height:29px;line-height:29px;font-size:21px;color:#333;">2024-07-19 19:13:59</div>
<div class="abs btn2" style="left:2418px;top:634.80px;background:#18bc9c"></div>
<svg class="i" style="left:2426px;top:642.2px;width:15.5px;height:15.5px;" viewBox="0 0 100 100"><g fill="#fff"><path d="M70,6 L94,30 L86,38 L62,14Z"/><path d="M56,20 L80,44 L32,92 L8,68Z"/><path d="M4,72 L28,96 L0,100Z"/></g></svg>
<div class="abs btn2" style="left:2456px;top:634.80px;background:#f75444"></div>
<svg class="i" style="left:2464px;top:642.5px;width:15px;height:15.5px;" viewBox="0 0 100 112" preserveAspectRatio="none"><g fill="#fff"><path fill-rule="evenodd" d="M30,14 L30,8 Q30,0 38,0 L62,0 Q70,0 70,8 L70,14Z M39,14 L39,9 L61,9 L61,14Z"/><rect x="0" y="13" width="100" height="15" rx="2"/><path d="M9,28 L91,28 L88,104 Q88,112 80,112 L20,112 Q12,112 12,104Z"/></g><g fill="#f75444"><rect x="29" y="40" width="7" height="60"/><rect x="46.5" y="40" width="7" height="60"/><rect x="64" y="40" width="7" height="60"/></g></svg>
<div class="abs cb" style="left:414px;top:708.36px"></div>
<div class="t" style="left:200.45px;width:600px;text-align:center;top:704.26px;height:29px;line-height:29px;font-size:21px;color:#333;">183</div>
<div class="t" style="left:339.70000000000005px;width:600px;text-align:center;top:704.26px;height:29px;line-height:29px;font-size:21px;color:#333;">13988888888</div>
<div class="t" style="left:522.5px;width:600px;text-align:center;top:704.26px;height:29px;line-height:29px;font-size:21px;color:#333;">139****8888</div>
<div class="t" style="left:677.0px;width:600px;text-align:center;top:704.26px;height:29px;line-height:29px;font-size:21px;color:#333;">100.00</div>
<div class="t" style="left:792.3px;width:600px;text-align:center;top:705.46px;height:29px;line-height:29px;font-size:21px;color:#16a98c;">支出</div>
<div class="t" style="left:1073.3px;width:600px;text-align:center;top:705.46px;height:29px;line-height:29px;font-size:21px;color:#333;">会员申请提现</div>
<div class="t" style="left:1385.8px;width:600px;text-align:center;top:704.26px;height:29px;line-height:29px;font-size:21px;color:#333;">5636.55</div>
<div class="t" style="left:1514.05px;width:600px;text-align:center;top:705.46px;height:29px;line-height:29px;font-size:21px;color:#333;">现金</div>
<div class="t" style="left:1693.75px;width:600px;text-align:center;top:704.26px;height:29px;line-height:29px;font-size:21px;color:#333;">2024-07-19 19:12:51</div>
<div class="t" style="left:1957.0px;width:600px;text-align:center;top:704.26px;height:29px;line-height:29px;font-size:21px;color:#333;">2024-07-19 19:12:51</div>
<div class="abs btn2" style="left:2418px;top:705.36px;background:#18bc9c"></div>
<svg class="i" style="left:2426px;top:712.76px;width:15.5px;height:15.5px;" viewBox="0 0 100 100"><g fill="#fff"><path d="M70,6 L94,30 L86,38 L62,14Z"/><path d="M56,20 L80,44 L32,92 L8,68Z"/><path d="M4,72 L28,96 L0,100Z"/></g></svg>
<div class="abs btn2" style="left:2456px;top:705.36px;background:#f75444"></div>
<svg class="i" style="left:2464px;top:713.06px;width:15px;height:15.5px;" viewBox="0 0 100 112" preserveAspectRatio="none"><g fill="#fff"><path fill-rule="evenodd" d="M30,14 L30,8 Q30,0 38,0 L62,0 Q70,0 70,8 L70,14Z M39,14 L39,9 L61,9 L61,14Z"/><rect x="0" y="13" width="100" height="15" rx="2"/><path d="M9,28 L91,28 L88,104 Q88,112 80,112 L20,112 Q12,112 12,104Z"/></g><g fill="#f75444"><rect x="29" y="40" width="7" height="60"/><rect x="46.5" y="40" width="7" height="60"/><rect x="64" y="40" width="7" height="60"/></g></svg>
<div class="abs cb" style="left:414px;top:778.92px"></div>
<div class="t" style="left:200.45px;width:600px;text-align:center;top:774.82px;height:29px;line-height:29px;font-size:21px;color:#333;">182</div>
<div class="t" style="left:339.70000000000005px;width:600px;text-align:center;top:774.82px;height:29px;line-height:29px;font-size:21px;color:#333;">13888888888</div>
<div class="t" style="left:522.5px;width:600px;text-align:center;top:774.82px;height:29px;line-height:29px;font-size:21px;color:#333;">138****8888</div>
<div class="t" style="left:677.0px;width:600px;text-align:center;top:774.82px;height:29px;line-height:29px;font-size:21px;color:#333;">100.00</div>
<div class="t" style="left:792.3px;width:600px;text-align:center;top:776.02px;height:29px;line-height:29px;font-size:21px;color:#16a98c;">支出</div>
<div class="t" style="left:1073.3px;width:600px;text-align:center;top:776.02px;height:29px;line-height:29px;font-size:21px;color:#333;">会员申请提现</div>
<div class="t" style="left:1385.8px;width:600px;text-align:center;top:774.82px;height:29px;line-height:29px;font-size:21px;color:#333;">617.17</div>
<div class="t" style="left:1514.05px;width:600px;text-align:center;top:776.02px;height:29px;line-height:29px;font-size:21px;color:#333;">现金</div>
<div class="t" style="left:1693.75px;width:600px;text-align:center;top:774.82px;height:29px;line-height:29px;font-size:21px;color:#333;">2024-07-19 19:10:29</div>
<div class="t" style="left:1957.0px;width:600px;text-align:center;top:774.82px;height:29px;line-height:29px;font-size:21px;color:#333;">2024-07-19 19:10:29</div>
<div class="abs btn2" style="left:2418px;top:775.92px;background:#18bc9c"></div>
<svg class="i" style="left:2426px;top:783.32px;width:15.5px;height:15.5px;" viewBox="0 0 100 100"><g fill="#fff"><path d="M70,6 L94,30 L86,38 L62,14Z"/><path d="M56,20 L80,44 L32,92 L8,68Z"/><path d="M4,72 L28,96 L0,100Z"/></g></svg>
<div class="abs btn2" style="left:2456px;top:775.92px;background:#f75444"></div>
<svg class="i" style="left:2464px;top:783.62px;width:15px;height:15.5px;" viewBox="0 0 100 112" preserveAspectRatio="none"><g fill="#fff"><path fill-rule="evenodd" d="M30,14 L30,8 Q30,0 38,0 L62,0 Q70,0 70,8 L70,14Z M39,14 L39,9 L61,9 L61,14Z"/><rect x="0" y="13" width="100" height="15" rx="2"/><path d="M9,28 L91,28 L88,104 Q88,112 80,112 L20,112 Q12,112 12,104Z"/></g><g fill="#f75444"><rect x="29" y="40" width="7" height="60"/><rect x="46.5" y="40" width="7" height="60"/><rect x="64" y="40" width="7" height="60"/></g></svg>
<div class="abs cb" style="left:414px;top:849.48px"></div>
<div class="t" style="left:200.45px;width:600px;text-align:center;top:845.38px;height:29px;line-height:29px;font-size:21px;color:#333;">181</div>
<div class="t" style="left:339.70000000000005px;width:600px;text-align:center;top:845.38px;height:29px;line-height:29px;font-size:21px;color:#333;">13888888888</div>
<div class="t" style="left:522.5px;width:600px;text-align:center;top:845.38px;height:29px;line-height:29px;font-size:21px;color:#333;">138****8888</div>
<div class="t" style="left:677.0px;width:600px;text-align:center;top:845.38px;height:29px;line-height:29px;font-size:21px;color:#333;">500.00</div>
<div class="t" style="left:792.3px;width:600px;text-align:center;top:846.58px;height:29px;line-height:29px;font-size:21px;color:#16a98c;">支出</div>
<div class="t" style="left:1073.3px;width:600px;text-align:center;top:846.58px;height:29px;line-height:29px;font-size:21px;color:#333;">会员申请提现</div>
<div class="t" style="left:1385.8px;width:600px;text-align:center;top:845.38px;height:29px;line-height:29px;font-size:21px;color:#333;">1117.17</div>
<div class="t" style="left:1514.05px;width:600px;text-align:center;top:846.58px;height:29px;line-height:29px;font-size:21px;color:#333;">现金</div>
<div class="t" style="left:1693.75px;width:600px;text-align:center;top:845.38px;height:29px;line-height:29px;font-size:21px;color:#333;">2024-07-19 18:56:29</div>
<div class="t" style="left:1957.0px;width:600px;text-align:center;top:845.38px;height:29px;line-height:29px;font-size:21px;color:#333;">2024-07-19 18:56:29</div>
<div class="abs btn2" style="left:2418px;top:846.48px;background:#18bc9c"></div>
<svg class="i" style="left:2426px;top:853.8800000000001px;width:15.5px;height:15.5px;" viewBox="0 0 100 100"><g fill="#fff"><path d="M70,6 L94,30 L86,38 L62,14Z"/><path d="M56,20 L80,44 L32,92 L8,68Z"/><path d="M4,72 L28,96 L0,100Z"/></g></svg>
<div class="abs btn2" style="left:2456px;top:846.48px;background:#f75444"></div>
<svg class="i" style="left:2464px;top:854.1800000000001px;width:15px;height:15.5px;" viewBox="0 0 100 112" preserveAspectRatio="none"><g fill="#fff"><path fill-rule="evenodd" d="M30,14 L30,8 Q30,0 38,0 L62,0 Q70,0 70,8 L70,14Z M39,14 L39,9 L61,9 L61,14Z"/><rect x="0" y="13" width="100" height="15" rx="2"/><path d="M9,28 L91,28 L88,104 Q88,112 80,112 L20,112 Q12,112 12,104Z"/></g><g fill="#f75444"><rect x="29" y="40" width="7" height="60"/><rect x="46.5" y="40" width="7" height="60"/><rect x="64" y="40" width="7" height="60"/></g></svg>
<div class="abs cb" style="left:414px;top:920.04px"></div>
<div class="t" style="left:200.45px;width:600px;text-align:center;top:915.94px;height:29px;line-height:29px;font-size:21px;color:#333;">180</div>
<div class="t" style="left:339.70000000000005px;width:600px;text-align:center;top:915.94px;height:29px;line-height:29px;font-size:21px;color:#333;">15822225555</div>
<div class="t" style="left:522.5px;width:600px;text-align:center;top:915.94px;height:29px;line-height:29px;font-size:21px;color:#333;">158****5555</div>
<div class="t" style="left:677.0px;width:600px;text-align:center;top:915.94px;height:29px;line-height:29px;font-size:21px;color:#333;">2.00</div>
<div class="t" style="left:792.3px;width:600px;text-align:center;top:917.14px;height:29px;line-height:29px;font-size:21px;color:#333;">收入</div>
<div class="t" style="left:1073.3px;width:600px;text-align:center;top:917.14px;height:29px;line-height:29px;font-size:21px;color:#333;">获取158****5555注册奖励2usdt</div>
<div class="t" style="left:1385.8px;width:600px;text-align:center;top:915.94px;height:29px;line-height:29px;font-size:21px;color:#333;">0.00</div>
<div class="t" style="left:1514.05px;width:600px;text-align:center;top:917.14px;height:29px;line-height:29px;font-size:21px;color:#333;">现金</div>
<div class="t" style="left:1693.75px;width:600px;text-align:center;top:915.94px;height:29px;line-height:29px;font-size:21px;color:#333;">2024-07-19 18:50:14</div>
<div class="t" style="left:1957.0px;width:600px;text-align:center;top:915.94px;height:29px;line-height:29px;font-size:21px;color:#333;">2024-07-19 18:50:14</div>
<div class="abs btn2" style="left:2418px;top:917.04px;background:#18bc9c"></div>
<svg class="i" style="left:2426px;top:924.44px;width:15.5px;height:15.5px;" viewBox="0 0 100 100"><g fill="#fff"><path d="M70,6 L94,30 L86,38 L62,14Z"/><path d="M56,20 L80,44 L32,92 L8,68Z"/><path d="M4,72 L28,96 L0,100Z"/></g></svg>
<div class="abs btn2" style="left:2456px;top:917.04px;background:#f75444"></div>
<svg class="i" style="left:2464px;top:924.74px;width:15px;height:15.5px;" viewBox="0 0 100 112" preserveAspectRatio="none"><g fill="#fff"><path fill-rule="evenodd" d="M30,14 L30,8 Q30,0 38,0 L62,0 Q70,0 70,8 L70,14Z M39,14 L39,9 L61,9 L61,14Z"/><rect x="0" y="13" width="100" height="15" rx="2"/><path d="M9,28 L91,28 L88,104 Q88,112 80,112 L20,112 Q12,112 12,104Z"/></g><g fill="#f75444"><rect x="29" y="40" width="7" height="60"/><rect x="46.5" y="40" width="7" height="60"/><rect x="64" y="40" width="7" height="60"/></g></svg>
<div class="t" style="left:390px;top:993.20px;height:29px;line-height:29px;font-size:21px;color:#333;">显示第 1 到第 10 条记录，总共 175 条记录 每页显示</div>
<div class="abs" style="left:886px;top:986px;width:78px;height:48px;border:1.5px solid #dcdcdc;background:#f4f4f4;border-radius:4.5px"></div>
<div class="t" style="left:906.5px;top:995.20px;height:27px;line-height:27px;font-size:19.5px;color:#333;">10</div>
<svg class="i" style="left:933px;top:1009.5px;width:12.5px;height:5px;" viewBox="0 0 100 100" preserveAspectRatio="none"><path fill="#333" d="M0,100 L50,0 L100,100Z"/></svg>
<div class="t" style="left:970px;top:993.20px;height:29px;line-height:29px;font-size:21px;color:#333;">条记录</div>
<div class="abs" style="left:1794px;top:983px;width:555px;height:50px;border:1.5px solid #dcdcdc;background:#f9f9f9;border-radius:4.5px"></div>
<div class="abs" style="left:2134.6px;top:984.5px;width:53.8px;height:47px;background:#fff"></div>
<div class="abs" style="left:1893.2px;top:983px;width:49.6px;height:50px;background:#444c69"></div>
<div class="abs" style="left:1942.05px;top:983px;width:1.5px;height:50px;background:#dcdcdc"></div>
<div class="abs" style="left:1989.85px;top:983px;width:1.5px;height:50px;background:#dcdcdc"></div>
<div class="abs" style="left:2037.95px;top:983px;width:1.5px;height:50px;background:#dcdcdc"></div>
<div class="abs" style="left:2085.95px;top:983px;width:1.5px;height:50px;background:#dcdcdc"></div>
<div class="abs" style="left:2133.85px;top:983px;width:1.5px;height:50px;background:#dcdcdc"></div>
<div class="abs" style="left:2187.65px;top:983px;width:1.5px;height:50px;background:#dcdcdc"></div>
<div class="abs" style="left:2247.75px;top:983px;width:1.5px;height:50px;background:#dcdcdc"></div>
<div class="t" style="left:1543.6px;width:600px;text-align:center;top:992.70px;height:29px;line-height:29px;font-size:21px;color:#666;">上一页</div>
<div class="t" style="left:1618.0px;width:600px;text-align:center;top:992.70px;height:29px;line-height:29px;font-size:21px;color:#fff;">1</div>
<div class="t" style="left:1666.6999999999998px;width:600px;text-align:center;top:992.70px;height:29px;line-height:29px;font-size:21px;color:#666;">2</div>
<div class="t" style="left:1714.65px;width:600px;text-align:center;top:992.70px;height:29px;line-height:29px;font-size:21px;color:#666;">3</div>
<div class="t" style="left:1762.6999999999998px;width:600px;text-align:center;top:992.70px;height:29px;line-height:29px;font-size:21px;color:#666;">4</div>
<div class="t" style="left:1810.6499999999996px;width:600px;text-align:center;top:992.70px;height:29px;line-height:29px;font-size:21px;color:#666;">5</div>
<div class="t" style="left:1861.5px;width:600px;text-align:center;top:992.70px;height:29px;line-height:29px;font-size:21px;color:#666;">...</div>
<div class="t" style="left:1918.4499999999998px;width:600px;text-align:center;top:992.70px;height:29px;line-height:29px;font-size:21px;color:#666;">18</div>
<div class="t" style="left:1998.4px;width:600px;text-align:center;top:992.70px;height:29px;line-height:29px;font-size:21px;color:#666;">下一页</div>
<div class="abs" style="left:2357px;top:983px;width:75px;height:49px;border:1.5px solid #d2d2d2;background:#fff"></div>
<div class="abs" style="left:2439.5px;top:984.5px;width:76px;height:47px;border:1.5px solid #dcdcdc;background:#f4f4f4;border-radius:4.5px"></div>
<div class="t" style="left:2177.5px;width:600px;text-align:center;top:992.70px;height:29px;line-height:29px;font-size:21px;color:#333;">跳转</div>
<div class="t" style="left:980px;width:600px;text-align:center;top:1100.20px;height:32px;line-height:32px;font-size:23px;color:#fff;transform:scaleY(1.12);text-shadow:-1.2px -1.2px 0 #555,1.2px -1.2px 0 #555,-1.2px 1.2px 0 #555,1.2px 1.2px 0 #555,0 1.5px 0 #555,0 -1.5px 0 #555,1.5px 0 0 #555,-1.5px 0 0 #555">www.tiaozhuan.net</div>
</body></html>
